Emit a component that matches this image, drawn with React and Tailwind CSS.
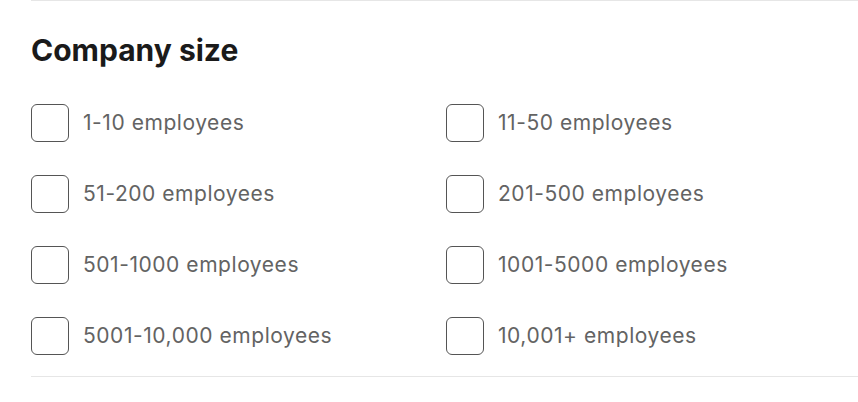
const sizes = [
  '1-10 employees',
  '11-50 employees',
  '51-200 employees',
  '201-500 employees',
  '501-1000 employees',
  '1001-5000 employees',
  '5001-10,000 employees',
  '10,001+ employees',
];

export default function App() {
  return (
    <div className="min-h-screen bg-white pl-[31px]" style={{ fontFamily: 'Inter, "Noto Sans", sans-serif' }}>
      <section className="border-t border-b border-[#e6e6e6] pt-[29px] pb-[21px]">
        <h2 className="text-[30px] leading-[40px] font-bold text-[#1a1a1a]">Company size</h2>
        <div className="grid grid-cols-[415px_1fr] gap-y-[33px] mt-[34px]">
          {sizes.map((label) => (
            <label key={label} className="flex items-center gap-[14px] cursor-pointer">
              <input type="checkbox" className="appearance-none w-[38px] h-[38px] rounded-[6px] border-[1.5px] border-[#555555] bg-white" />
              <span className="text-[21px] tracking-[0.55px] text-[#636363]">{label}</span>
            </label>
          ))}
        </div>
      </section>
    </div>
  );
}
